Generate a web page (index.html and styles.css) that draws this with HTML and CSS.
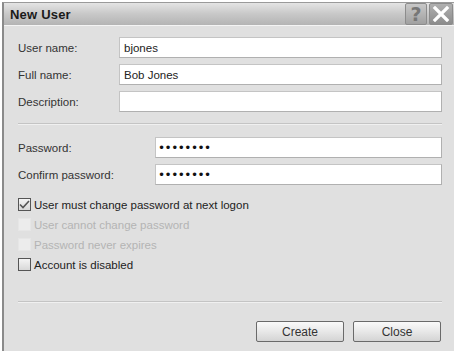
FILE: index.html
```html
<!DOCTYPE html>
<html lang="en">
<head>
<meta charset="UTF-8">
<title>New User</title>
<link rel="stylesheet" href="styles.css">
</head>
<body>

<div class="window">
<div class="titlebar">
<div class="title">New User</div>
<div class="title-btns">
<button class="tbtn help">?</button>
<button class="tbtn close">
<svg width="18" height="16" viewBox="0 0 18 16"><path d="M3 2 L15 14 M15 2 L3 14" stroke="#fff" stroke-width="3.2" stroke-linecap="square"/></svg>
</button>
</div>
</div>

<div class="content">
<div class="rows names">
<div class="row"><label>User name:</label><input type="text" value="bjones"></div>
<div class="row"><label>Full name:</label><input type="text" value="Bob Jones"></div>
<div class="row"><label>Description:</label><input type="text" value=""></div>
</div>

<div class="sep"></div>

<div class="rows pw">
<div class="row"><label>Password:</label><input type="password" value="abcdefgh"></div>
<div class="row"><label>Confirm password:</label><input type="password" value="abcdefgh"></div>
</div>

<div class="checks">
<div class="check"><span class="box checked"><svg width="11" height="9" viewBox="0 0 11 9"><path d="M1 4.5 L4 7.5 L10 1" fill="none" stroke="#555" stroke-width="1.6"/></svg></span>User must change password at next logon</div>
<div class="check disabled"><span class="box"></span>User cannot change password</div>
<div class="check disabled"><span class="box"></span>Password never expires</div>
<div class="check"><span class="box"></span>Account is disabled</div>
</div>

<div class="sep bottom"></div>

<div class="actions">
<button class="btn">Create</button>
<button class="btn">Close</button>
</div>
</div>
</div>

</body>
</html>
```

FILE: styles.css
```css
/* ---------- GLOBAL ---------- */
*{margin:0;padding:0;box-sizing:border-box;}
body{background:#fff;font-family:"Liberation Sans",Arial,sans-serif;color:#333;}

/* ---------- WINDOW ---------- */
.window{
margin:2px 0 0 2px;
height:349px;
background:#e0e0e0;
border-left:2px solid #8a8a8a;
border-top:1px solid #9a9a9a;
display:flex;
flex-direction:column;
}
.titlebar{
height:23px;
background:linear-gradient(#e4e4e4,#c8c8c8 50%,#b4b4b4);
display:flex;
justify-content:space-between;
align-items:center;
border-bottom:1px solid #f4f4f4;
}
.title{font-size:13px;font-weight:700;color:#1a1a1a;padding-left:6px;letter-spacing:0.2px;}
.title-btns{display:flex;gap:2px;height:100%;padding:0 1px 0 0;}
.tbtn{
width:22px;height:22px;border:1px solid #8c8c8c;border-radius:2px;
display:flex;align-items:center;justify-content:center;
}
.help{background:linear-gradient(#c8c8c8,#a0a0a0);color:#777;font-size:19px;font-weight:700;font-family:"DejaVu Sans",sans-serif;}
.close{width:24px;background:linear-gradient(#b0b0b0,#8c8c8c);}

/* ---------- FORM ---------- */
.content{padding:11px 12px 0 12px;display:flex;flex-direction:column;flex:1;}
.rows{display:flex;flex-direction:column;gap:6px;}
.row{display:flex;align-items:center;}
.row label{font-size:11.5px;color:#333;padding-left:2px;}
.row input{
margin-left:auto;
height:21px;
background:#fff;
border:1px solid #c4c4c4;
border-right-color:#b0b0b0;
border-bottom-color:#b0b0b0;
font-family:"Liberation Sans",Arial,sans-serif;
font-size:11.5px;
color:#222;
padding:0 4px;
outline:none;
}
.names input{width:323px;}
.pw input{width:287px;font-family:"DejaVu Sans",sans-serif;font-size:12px;letter-spacing:-0.5px;color:#111;padding:0 2px;}

.sep{height:2px;border-top:1px solid #c4c4c4;border-bottom:1px solid #f0f0f0;margin:11px 0 12px 2px;}
.pw{gap:6px;}

/* ---------- CHECKBOXES ---------- */
.checks{display:flex;flex-direction:column;gap:7px;margin-top:13px;padding-left:2px;}
.check{display:flex;align-items:center;font-size:11.5px;color:#222;height:13px;}
.box{
width:13px;height:13px;border:1px solid #555;background:linear-gradient(#f4f4f4,#d8d8d8);
margin-right:3px;display:flex;align-items:center;justify-content:center;
}
.disabled{color:#b4b4b4;}
.disabled .box{border-color:#e6e6e6;background:#ececec;}

.bottom{margin-top:30px;margin-bottom:0;}

/* ---------- BUTTONS ---------- */
.actions{display:flex;justify-content:flex-end;gap:9px;margin-top:18px;padding-right:1px;}
.btn{
width:88px;height:21px;
border:1px solid #6a6a6a;border-radius:2px;
background:linear-gradient(#fafafa,#e8e8e8 50%,#d4d4d4);
font-family:"Liberation Sans",Arial,sans-serif;font-size:12px;color:#333;
}
```
